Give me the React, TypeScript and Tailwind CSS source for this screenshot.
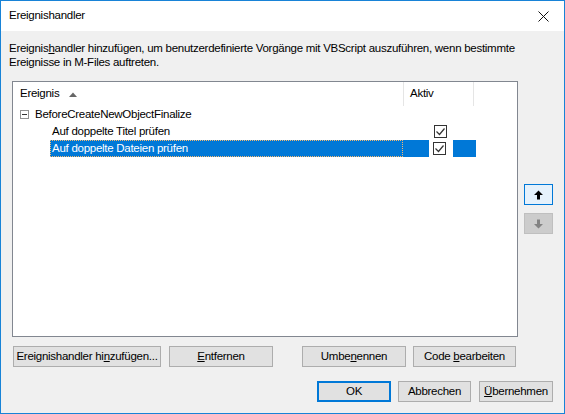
import React from 'react'

const font = { fontFamily: '"Liberation Sans", Arial, sans-serif' }

function Btn({
  children,
  className = '',
}: {
  children: React.ReactNode
  className?: string
}) {
  return (
    <button
      type="button"
      className={`flex h-[21px] items-center justify-center border border-[#adadad] bg-[#e1e1e1] text-[11.5px] leading-none tracking-[-0.27px] text-black ${className}`}
    >
      <span>{children}</span>
    </button>
  )
}

function Check() {
  return (
    <span className="flex h-[13px] w-[13px] items-center justify-center border border-[#333333] bg-white">
      <svg width="11" height="11" viewBox="0 0 11 11">
        <path d="M1.5 5.5 L4.5 8.5 L9.5 2.5" fill="none" stroke="#333" strokeWidth="1.2" />
      </svg>
    </span>
  )
}

function Arrow({ color, down = false }: { color: string; down?: boolean }) {
  return (
    <svg width="9" height="10" viewBox="0 0 9 10" className={down ? 'rotate-180' : ''}>
      <path d="M4.5 0.5 L9 5 L6 5 L6 9.5 L3 9.5 L3 5 L0 5 Z" fill={color} />
    </svg>
  )
}

export default function App() {
  return (
    <div
      className="flex h-[414px] w-[565px] flex-col border border-[#1883d7] bg-[#f0f0f0] text-[11.5px] tracking-[-0.27px] text-black"
      style={font}
    >
      <div className="flex h-[30px] items-center justify-between bg-white pl-[8px] pr-[15px]">
        <span>Ereignishandler</span>
        <svg width="11" height="11" viewBox="0 0 11 11">
          <path d="M0.5 0.5 L10.5 10.5 M10.5 0.5 L0.5 10.5" stroke="#111" strokeWidth="1" />
        </svg>
      </div>

      <p className="mt-[10px] pl-[8px] pr-[10px] leading-[14px]">
        Ereignis<u>h</u>andler hinzufügen, um benutzerdefinierte Vorgänge mit VBScript auszuführen, wenn
        bestimmte
        <br />
        Ereignisse in M-Files auftreten.
      </p>

      <div className="mt-[12px] flex pl-[11px]">
        <div className="h-[256px] w-[506px] border border-[#828790] bg-white">
          <div className="flex h-[24px] items-center">
            <div className="flex h-full w-[390px] items-center gap-[10px] pl-[7px]">
              <span>Ereignis</span>
              <svg width="8" height="5" viewBox="0 0 8 5">
                <path d="M0 5 L4 0.5 L8 5 Z" fill="#666" />
              </svg>
            </div>
            <div className="h-full w-px bg-[#e5e5e5]" />
            <div className="flex h-full w-[69px] items-center pl-[6px]">Aktiv</div>
            <div className="h-full w-px bg-[#e5e5e5]" />
          </div>

          <div className="flex h-[17px] items-center pl-[7px]">
            <span className="flex h-[9px] w-[9px] items-center justify-center border border-[#919191] bg-white">
              <span className="h-px w-[5px] bg-[#333]" />
            </span>
            <span className="ml-[6px]">BeforeCreateNewObjectFinalize</span>
          </div>

          <div className="flex h-[17px] items-center">
            <div className="w-[390px] pl-[39px]">Auf doppelte Titel prüfen</div>
            <div className="w-px" />
            <div className="flex w-[69px] justify-center pl-[4px]">
              <Check />
            </div>
          </div>

          <div className="flex h-[17px] items-center">
            <div className="ml-[37px] flex h-full w-[379px] items-center bg-[#0078d7] text-white">
              <div className="flex h-full w-[353px] items-center border border-dotted border-[#f5b971] pl-[1px]">
                Auf doppelte Dateien prüfen
              </div>
            </div>
            <div className="flex w-[21px] justify-center">
              <Check />
            </div>
            <div className="ml-[3px] h-full w-[23px] bg-[#0078d7]" />
          </div>
        </div>

        <div className="ml-[6px] flex flex-col gap-[8px] pt-[103px]">
          <button
            type="button"
            className="flex h-[21px] w-[29px] items-center justify-center border border-[#0078d7] bg-[#e5f1fb]"
          >
            <Arrow color="#000" />
          </button>
          <button
            type="button"
            className="flex h-[21px] w-[29px] items-center justify-center border border-[#bfbfbf] bg-[#cccccc]"
          >
            <Arrow color="#838383" down />
          </button>
        </div>
      </div>

      <div className="mt-[9px] flex pl-[12px]">
        <Btn className="w-[148px]">
          Ereignishandler hi<u>n</u>zufügen...
        </Btn>
        <Btn className="ml-[8px] w-[104px]">
          <u>E</u>ntfernen
        </Btn>
        <Btn className="ml-[29px] w-[104px]">
          Umbe<u>n</u>ennen
        </Btn>
        <Btn className="ml-[7px] w-[103px]">
          Code <u>b</u>earbeiten
        </Btn>
      </div>

      <div className="mt-[14px] flex pl-[316px]">
        <button
          type="button"
          className="flex h-[21px] w-[74px] items-center justify-center border-2 border-[#0078d7] bg-[#e1e1e1] text-[11.5px] leading-none"
        >
          OK
        </button>
        <Btn className="ml-[7px] w-[73px]">Abbrechen</Btn>
        <Btn className="ml-[8px] w-[74px]">
          <u>Ü</u>bernehmen
        </Btn>
      </div>
    </div>
  )
}
